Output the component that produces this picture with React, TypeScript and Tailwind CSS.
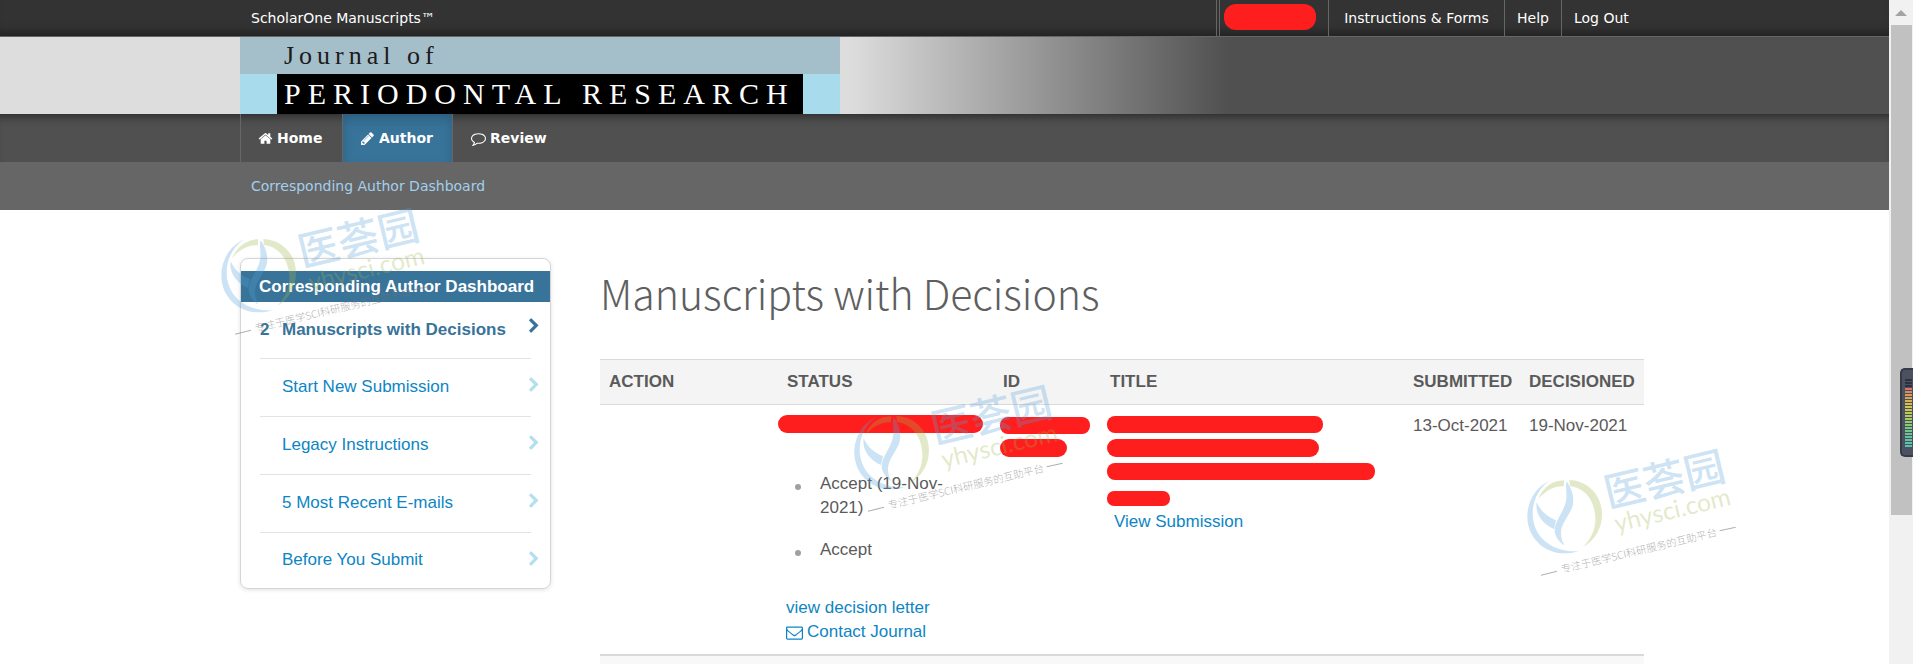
import React from 'react';

const ICONS = {
  home: 'M1472 992v480q0 26-19 45t-45 19h-384v-384h-256v384h-384q-26 0-45-19t-19-45v-480q0-1 .5-3t.5-3l575-474 575 474q1 2 1 6zm223-69l-62 74q-8 9-21 11h-3q-13 0-21-7l-692-577-692 577q-12 8-24 7-13-2-21-11l-62-74q-8-10-7-23.5t11-21.5l719-599q32-26 76-26t76 26l244 204v-195q0-14 9-23t23-9h192q14 0 23 9t9 23v408l219 182q10 8 11 21.5t-7 23.5z',
  pencil: 'M491 1536l91-91-235-235-91 91v107h128v128h107zm523-928q0-22-22-22-10 0-17 7l-542 542q-7 7-7 17 0 22 22 22 10 0 17-7l542-542q7-7 7-17zm-54-192l416 416-832 832h-416v-416zm683 96q0 53-37 90l-166 166-416-416 166-165q36-38 90-38 53 0 91 38l235 234q37 39 37 91z',
  comment: 'M896 384q-204 0-381.500 69.500t-282 187.500-104.500 255q0 112 71.500 213.500t201.500 175.500l87 50-27 96q-24 91-70 172 152-63 275-171l43-38 57 6q69 8 130 8 204 0 381.500-69.500t282-187.500 104.500-255-104.500-255-282-187.500-381.500-69.500zm896 512q0 174-120 321.500t-326 233-450 85.500q-70 0-145-8-198 175-460 242-49 14-114 22h-5q-15 0-27-10.500t-16-27.500v-1q-3-4-.5-12t2-10 4.500-9.500l6-9 7-8.500 8-9q7-8 31-34.500t34.500-38 31-39.500 32.500-51 27-59 26-76q-157-89-247.500-220t-90.500-281q0-174 120-321.500t326-233 450-85.500 450 85.500 326 233 120 321.500z',
  envelope: 'M1664 1504v-768q-32 36-69 66-268 206-426 338-51 43-83 67t-86.500 48.500-102.500 24.500h-2q-48 0-102.500-24.500t-86.500-48.500-83-67q-158-132-426-338-37-30-69-66v768q0 13 9.500 22.500t22.500 9.500h1472q13 0 22.500-9.500t9.500-22.500zm0-1051v-24.500l-.5-13-3-12.500-5.500-9-9-7.500-14-2.500h-1472q-13 0-22.500 9.500t-9.500 22.500q0 168 147 284 193 152 401 317 6 5 35 29.500t46 37.500 44.500 31.500 50.500 27.500 43 9h2q20 0 43-9t50.500-27.500 44.500-31.500 46-37.500 35-29.500q208-165 401-317 54-43 100.500-115.500t46.500-131.500zm128-37v1088q0 66-47 113t-113 47h-1472q-66 0-113-47t-47-113v-1088q0-66 47-113t113-47h1472q66 0 113 47t47 113z',
  chevron: 'M1363 877l-742 742q-19 19-45 19t-45-19l-166-166q-19-19-19-45t19-45l531-531-531-531q-19-19-19-45t19-45l166-166q19-19 45-19t45 19l742 742q19 19 19 45t-19 45z',
};

function Icon({ name, className }: { name: keyof typeof ICONS; className: string }) {
  return (
    <svg viewBox="0 0 1792 1792" fill="currentColor" aria-hidden="true" className={className}>
      <path d={ICONS[name]} />
    </svg>
  );
}

function Redacted({ className }: { className: string }) {
  return <span className={`block bg-[#ff1e1e] ${className}`} />;
}

function Watermark({ className }: { className: string }) {
  return (
    <svg
      viewBox="0 300 720 420"
      aria-hidden="true"
      className={`pointer-events-none absolute z-10 h-[140px] w-[240px] overflow-visible ${className}`}
    >
      <g fill="#52a2da" fillOpacity="0.3">
        <path d="M119 422C78 440 52 482 52 530C52 592 102 640 162 640C180 640 196 637 209 632C196 635 182 634 170 632C110 624 68 580 68 520C68 480 88 442 119 422Z" />
        <path d="M170 424C186 446 192 470 189 492C184 522 152 548 153 580C153 594 157 605 163 616C146 606 133 586 134 568C136 540 166 510 169 476C171 456 165 438 170 424Z" />
        <path d="M80 487C92 514 112 530 138 541L132 567C108 557 74 530 80 487Z" />
        <text transform="translate(294 505) rotate(-13.5)" fontSize="123" fontWeight="500" fontFamily="'Noto Sans CJK SC', sans-serif">医荟园</text>
      </g>
      <g fill="#9eb648" fillOpacity="0.3">
        <path d="M84 478C100 440 128 422 162 421V439C132 438 106 452 84 478Z" />
        <path d="M178 420C236 422 276 468 276 522C276 566 254 602 220 620C246 594 258 564 256 530C252 480 226 444 180 438Z" />
        <text transform="translate(320 577) rotate(-13.5)" fontSize="74" fontFamily="Lato, sans-serif">yhysci.com</text>
      </g>
      <g fill="#777777" fillOpacity="0.6">
        <text transform="translate(156 699) rotate(-13.5)" fontSize="31" fontWeight="300" fontFamily="'Noto Sans CJK SC', sans-serif">专注于医学SCI科研服务的互助平台</text>
        <path d="M93 704L141 692.500V695.500L93 707ZM629 571L677 560V563L629 574Z" />
      </g>
    </svg>
  );
}

const SIDE_LINKS = ['Start New Submission', 'Legacy Instructions', '5 Most Recent E-mails', 'Before You Submit'];

const METER = [
  'bg-[#2d3140]', 'bg-[#2d3140]', 'bg-[#2d3140]', 'bg-[#e0706a]', 'bg-[#d98a5c]', 'bg-[#dc9a50]', 'bg-[#dca24c]',
  'bg-[#d9b04a]', 'bg-[#d6bd4a]', 'bg-[#d2c64c]', 'bg-[#c8c850]', 'bg-[#bcc955]', 'bg-[#b0ca59]', 'bg-[#a2cb60]',
  'bg-[#94cb68]', 'bg-[#86ca72]', 'bg-[#7ac97c]', 'bg-[#6ec886]', 'bg-[#66c78e]', 'bg-[#60c698]', 'bg-[#5cc5a0]',
  'bg-[#59c4a6]', 'bg-[#56c3ac]',
];

const CONTAINER = 'mx-auto w-full max-w-[1409px]';

function Header() {
  return (
    <header className="font-['DejaVu_Sans',Verdana,sans-serif] text-sm text-white">
      <div className="border-b border-[#666] bg-[#333] shadow-[inset_0_-10px_8px_-6px_#222]">
        <div className={`${CONTAINER} flex h-9 items-stretch justify-between pr-[5px]`}>
          <a href="#" className="flex items-center pl-[11px]">ScholarOne Manuscripts™</a>
          <nav className="flex">
            <span className="w-[3px] border-l border-[#666]" />
            <a href="#" aria-label="Account" className="flex w-[109px] border-l border-[#666] pt-1 pl-1">
              <Redacted className="h-[26px] w-[92px] rounded-[12px]" />
            </a>
            <a href="#" className="flex w-[176px] items-center justify-center border-l border-[#666]">Instructions &amp; Forms</a>
            <a href="#" className="flex w-[57px] items-center justify-center border-l border-[#666]">Help</a>
            <a href="#" className="flex w-[83px] items-center border-l border-[#666] pl-3">Log Out</a>
          </nav>
        </div>
      </div>
      <div className="bg-[linear-gradient(to_right,#ddd_45%,#505050_65%)]">
        <div className={CONTAINER}>
          <div className="flex h-[77px] w-[600px] flex-col bg-[#a8dcec] font-['Liberation_Serif',serif]">
            <div className="flex h-[37px] items-center bg-[#a5bfca] pl-11 text-[26px] leading-[37px] tracking-[5px] text-[#1b1b1b]">Journal of</div>
            <div className="ml-[37px] flex h-10 w-[526px] items-center bg-black pl-[7px] text-[30px] leading-10 font-medium tracking-[7px] whitespace-nowrap">PERIODONTAL RESEARCH</div>
          </div>
        </div>
      </div>
      <div className="bg-[#505050] shadow-[inset_0_9px_8px_-6px_#2c2c2c]">
        <nav className={`${CONTAINER} flex h-12 font-bold`}>
          <a href="#" className="flex w-[102px] items-center gap-1 border-l border-[#666] pl-[17px]">
            <Icon name="home" className="size-[15px]" />Home
          </a>
          <a href="#" className="flex w-[111px] items-center gap-1 border-x border-[#666] bg-[#387399] pl-[17px] shadow-[inset_0_6px_12px_-2px_#2b5a7a]">
            <Icon name="pencil" className="size-[15px]" />Author
          </a>
          <a href="#" className="flex items-center gap-1 pl-[18px]">
            <Icon name="comment" className="size-[15px]" />Review
          </a>
        </nav>
      </div>
      <div className="bg-[#666]">
        <div className={`${CONTAINER} flex h-12 items-center pl-[11px]`}>
          <a href="#" className="text-[#a3cfec]">Corresponding Author Dashboard</a>
        </div>
      </div>
    </header>
  );
}

function Sidebar() {
  return (
    <aside className="mt-12 w-[311px] shrink-0 self-start rounded-lg border border-[#d5d5d5] pt-3 text-[17px] shadow-[0_1px_4px_rgba(0,0,0,0.12)]">
      <h2 className="bg-[#387399] pl-[18px] leading-[31px] font-bold whitespace-nowrap text-white">Corresponding Author Dashboard</h2>
      <ul>
        <li className="relative mx-[19px] flex h-[57px] items-center border-b border-[#e3e3e3] font-bold text-[#387399]">
          <span className="w-[22px]">2</span>
          <a href="#" className="whitespace-nowrap">Manuscripts with Decisions</a>
          <Icon name="chevron" className="absolute top-4 -right-[11px] size-4" />
        </li>
        {SIDE_LINKS.map((label) => (
          <li key={label} className="relative mx-[19px] flex h-[58px] items-center border-b border-[#e3e3e3] pb-px pl-[22px] text-[#0d85c4] last:h-[55px] last:border-b-0">
            <a href="#">{label}</a>
            <Icon name="chevron" className="absolute top-[18px] -right-[11px] size-4 text-[#b3dfef]" />
          </li>
        ))}
      </ul>
    </aside>
  );
}

function DecisionsTable() {
  return (
    <table className="w-full table-fixed border-collapse text-[17px] leading-6 text-[#5a5a5a]">
      <colgroup>
        <col className="w-[178px]" />
        <col className="w-[216px]" />
        <col className="w-[107px]" />
        <col />
        <col className="w-[116px]" />
        <col className="w-[124px]" />
      </colgroup>
      <thead>
        <tr className="h-[45px] border-y border-[#d9d9d9] bg-[#f4f4f4] text-left">
          {['Action', 'Status', 'ID', 'Title', 'Submitted', 'Decisioned'].map((h) => (
            <th key={h} className="pl-[9px] font-bold uppercase">{h}</th>
          ))}
        </tr>
      </thead>
      <tbody>
        <tr className="align-top">
          <td />
          <td className="pt-[10px]">
            <Redacted className="h-[18px] w-[205px] rounded-[9px]" />
            <ul className="mt-[39px] flex flex-col gap-[18px] pl-[17px]">
              {['Accept (19-Nov-2021)', 'Accept'].map((s) => (
                <li key={s} className="flex gap-[19px]">
                  <span className="mt-3 size-[6px] shrink-0 rounded-full bg-[#a0a0a0]" />
                  <span className="w-[140px]">{s}</span>
                </li>
              ))}
            </ul>
            <div className="mt-[34px] flex flex-col items-start pb-[10px] pl-2 text-[#0d85c4]">
              <a href="#">view decision letter</a>
              <a href="#" className="flex items-center gap-1">
                <Icon name="envelope" className="size-[17px]" />Contact Journal
              </a>
            </div>
          </td>
          <td className="pt-3 pl-1.5">
            <Redacted className="h-[17px] w-[90px] rounded-[8px]" />
            <Redacted className="mt-[5px] h-[18px] w-[67px] rounded-[9px]" />
          </td>
          <td className="pt-[11px] pl-1.5">
            <Redacted className="h-[17px] w-[216px] rounded-[8px]" />
            <Redacted className="mt-1.5 h-[18px] w-[212px] rounded-[9px]" />
            <Redacted className="mt-1.5 h-[17px] w-[268px] rounded-[8px]" />
            <Redacted className="mt-[11px] h-[15px] w-[63px] rounded-[7px]" />
            <a href="#" className="mt-1 ml-[7px] inline-block text-[#0d85c4]">View Submission</a>
          </td>
          <td className="pt-[9px] pl-[9px]">13-Oct-2021</td>
          <td className="pt-[9px] pl-[9px]">19-Nov-2021</td>
        </tr>
        <tr className="border-t-2 border-[#d9d9d9] bg-[#f8f8f8]">
          <td colSpan={6} className="h-12" />
        </tr>
      </tbody>
    </table>
  );
}

export default function App() {
  return (
    <div className="relative flex h-screen overflow-hidden bg-white font-['Liberation_Sans',Arial,sans-serif]">
      <div className="min-w-0 flex-1">
        <Header />
        <div className={`${CONTAINER} flex gap-[49px] pr-[5px]`}>
          <Sidebar />
          <main className="min-w-0 flex-1">
            <h1 className="mt-[50px] mb-[35px] text-[41px] leading-16 font-extralight whitespace-nowrap text-[#5f5f5f] font-['Noto_Sans_CJK_SC',sans-serif]">Manuscripts with Decisions</h1>
            <DecisionsTable />
          </main>
        </div>
      </div>

      <div className="flex w-6 shrink-0 flex-col items-center bg-[#f1f1f1]" aria-hidden="true">
        <svg viewBox="0 0 24 25" className="h-[25px] w-6 shrink-0"><path d="M6 16L12 10L18 16Z" fill="#a3a3a3" /></svg>
        <div className="h-[490px] w-[21px] shrink-0 bg-[#c1c1c1]" />
      </div>

      <Watermark className="top-[199px] left-[204px]" />
      <Watermark className="top-[376px] left-[837px]" />
      <Watermark className="top-[440px] left-[1510px]" />

      <div className="absolute top-[368px] right-0 flex h-[89px] w-[13px] flex-col items-end gap-px rounded-l-[5px] border-y-2 border-l-2 border-[#363a46] bg-[#4b5161] pt-[9px] pr-px" aria-hidden="true">
        {METER.map((c, i) => (
          <span key={i} className={`h-[2px] w-[7px] shrink-0 ${c}`} />
        ))}
      </div>
    </div>
  );
}
